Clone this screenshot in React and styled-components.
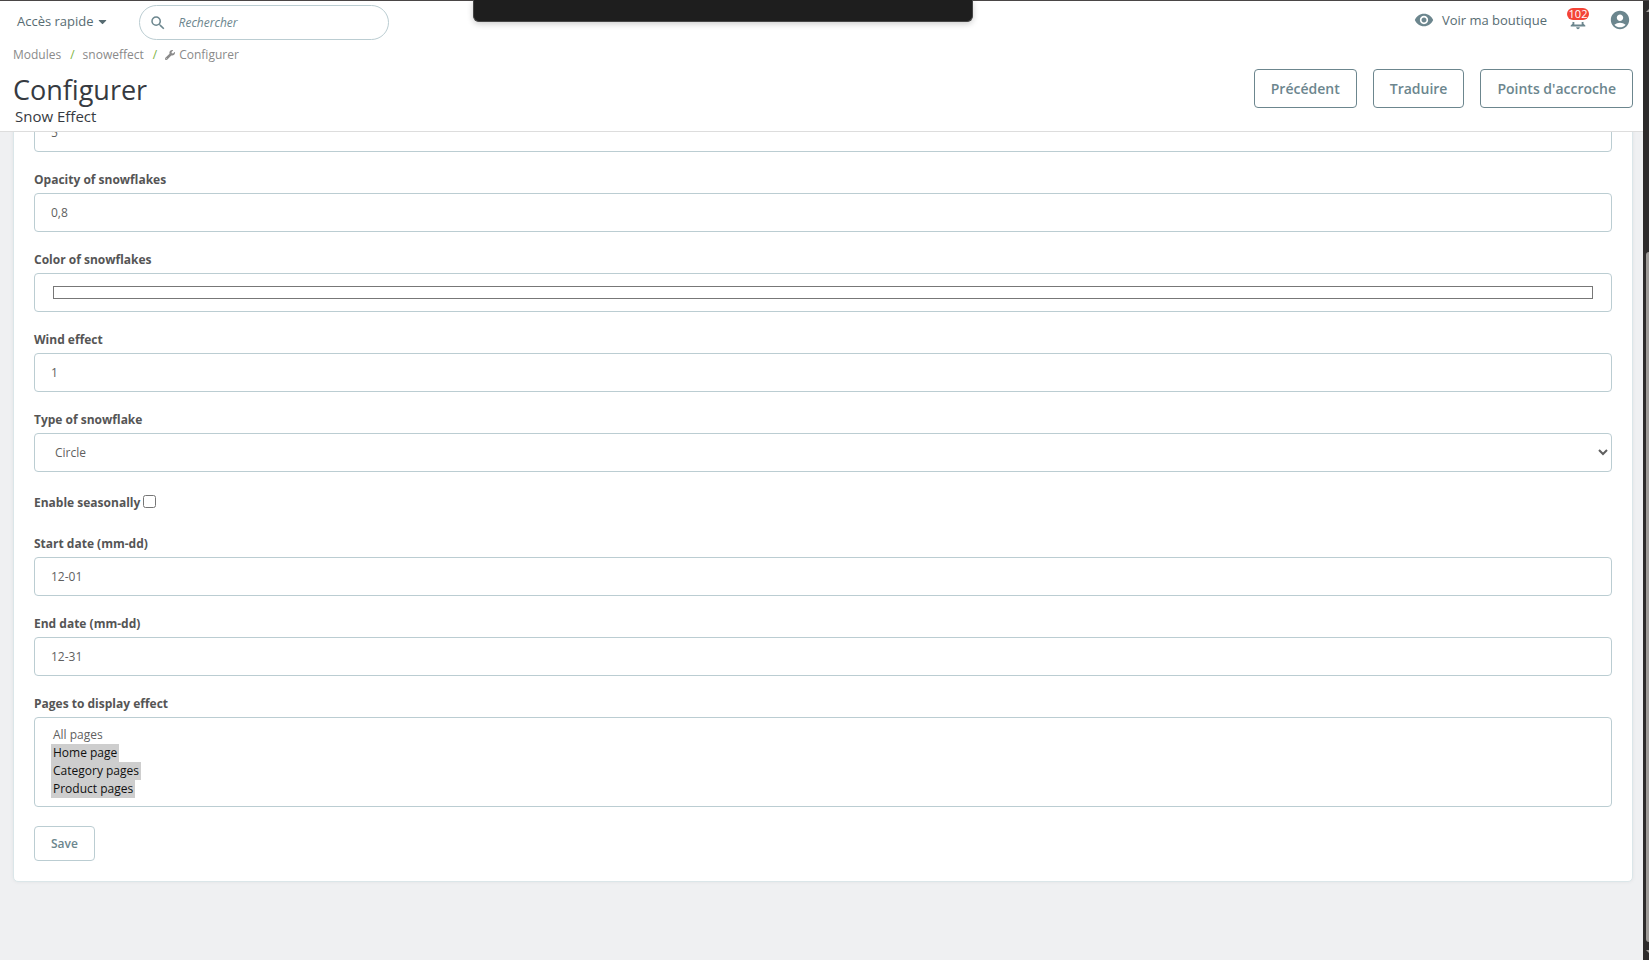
// Libraries
import React, { useLayoutEffect, useRef } from "react";
import styled, { createGlobalStyle } from "styled-components";
import { MdSearch, MdVisibility, MdNotificationsNone, MdAccountCircle } from "react-icons/md";
import { FaWrench, FaCaretDown } from "react-icons/fa";

// Styled
const GlobalStyle = createGlobalStyle`
    * {
        box-sizing: border-box;
    }

    body {
        margin: 0;
        background-color: #eff0f2;
        color: #363a41;
        font-family: "Open Sans", "Noto Sans", sans-serif;
        font-size: 12px;
        line-height: 20px;
    }

    button, input, select {
        font: inherit;
    }
`;

const Window = styled.div`
    display: flex;
    height: 100vh;
    border-top: 1px solid #4a4646;
`;

const Page = styled.div`
    display: flex;
    flex: 1;
    flex-direction: column;
    min-width: 0;
`;

const ScrollTrack = styled.div`
    display: flex;
    flex-direction: column;
    justify-content: space-between;
    width: 6px;
    padding-left: 3px;
    background-color: #2e2c2c;
    overflow: hidden;
`;

const ScrollArrow = styled.svg`
    display: block;
    width: 6px;
    height: 18px;
    fill: #a3a09d;
`;

const ScrollThumb = styled.div`
    height: 72%;
    margin-top: auto;
    width: 6px;
    border-radius: 4px;
    background-color: #9f9c99;
`;

const Notch = styled.div`
    position: absolute;
    top: 0;
    left: 473px;
    z-index: 2;
    width: 500px;
    height: 22px;
    border: 1px solid #454545;
    border-top: 0;
    border-radius: 0 0 6px 6px;
    background-color: #1e1e1e;
    box-shadow: 0 2px 6px rgba(0, 0, 0, 0.2);
`;

const PageHeader = styled.header`
    border-bottom: 1px solid #dddddd;
    background-color: #fff;
`;

const TopBar = styled.div`
    display: flex;
    align-items: flex-start;
    padding: 4px 12px 0 17px;
`;

const QuickAccess = styled.button`
    display: flex;
    align-items: center;
    gap: 2px;
    height: 32px;
    padding: 0;
    border: 0;
    background: none;
    color: #576c72;
    font-size: 13px;
`;

const SearchBox = styled.label`
    display: flex;
    align-items: center;
    gap: 12px;
    width: 250px;
    height: 35px;
    margin-left: 30px;
    padding: 0 9px;
    border: 1px solid #bbcdd2;
    border-radius: 18px;
    color: #6c868e;
`;

const SearchInput = styled.input`
    flex: 1;
    min-width: 0;
    padding: 0;
    border: 0;
    outline: 0;
    background: none;

    &::placeholder {
        color: #6c868e;
        font-style: italic;
        opacity: 1;
    }
`;

const TopLinks = styled.div`
    display: flex;
    align-items: center;
    height: 30px;
    margin-left: auto;
    color: #6c868e;
`;

const ShopLink = styled.a`
    display: flex;
    align-items: center;
    gap: 8px;
    color: #576c72;
    font-size: 13px;
    text-decoration: none;

    svg {
        color: #6c868e;
    }
`;

const IconButton = styled.button`
    position: relative;
    display: flex;
    margin-left: 20px;
    padding: 0;
    border: 0;
    background: none;
    color: inherit;
`;

const Badge = styled.span`
    position: absolute;
    top: -1px;
    left: 0;
    width: 22px;
    height: 12px;
    border-radius: 6px;
    background-color: #f44336;
    box-shadow: 0 0 0 2px #fff;
    color: #fff;
    font-size: 11px;
    line-height: 12px;
    text-align: center;
`;

const Breadcrumb = styled.nav`
    display: flex;
    align-items: center;
    padding: 5px 13px 0;
    color: #8a8a8a;
`;

const Crumb = styled.a`
    display: flex;
    align-items: center;
    gap: 4px;
    color: inherit;
    text-decoration: none;

    & + &::before {
        padding: 0 4px 0 9px;
        color: #7cb342;
        content: "/";
    }
`;

const TitleRow = styled.div`
    display: flex;
    justify-content: space-between;
    padding: 4px 10px 8px 13px;
`;

const PageTitle = styled.h1`
    margin: 0;
    font-size: 27px;
    font-weight: 400;
    line-height: 41px;
`;

const PageSubtitle = styled.h2`
    margin: 0;
    padding-left: 2px;
    font-size: 15px;
    font-weight: 400;
    line-height: 13px;
`;

const ButtonGroup = styled.div`
    display: flex;
    gap: 16px;
`;

const Button = styled.button`
    height: ${({ $small }) => ($small ? 35 : 39)}px;
    padding: 0 16px;
    border: 1px solid ${({ $small }) => ($small ? "#bbcdd2" : "#6c868e")};
    border-radius: 4px;
    background-color: #fff;
    color: #6c868e;
    font-size: ${({ $small }) => ($small ? 12 : 14)}px;
    font-weight: 600;
`;

const Content = styled.main`
    flex: 1;
    min-height: 0;
    padding: 0 10px 78px 13px;
    overflow-y: auto;
    scrollbar-width: none;
`;

const Card = styled.form`
    display: flex;
    flex-direction: column;
    align-items: flex-start;
    gap: 19px;
    padding: 20px;
    border: 1px solid #dbe6e9;
    border-radius: 5px;
    background-color: #fff;
    box-shadow: 0 0 4px rgba(0, 0, 0, 0.06);
`;

const FieldList = styled.div`
    display: flex;
    flex-direction: column;
    gap: 18px;
    width: 100%;
`;

const FieldBox = styled.div`
    display: flex;
    flex-direction: column;
    gap: 3px;
`;

const CheckRow = styled.div`
    display: flex;
    align-items: center;
    gap: 3px;
    height: 26px;
`;

const Label = styled.label`
    color: #555;
    font-weight: 700;
`;

const Input = styled.input`
    width: 100%;
    height: 39px;
    padding: ${({ type }) => (type === "color" ? "8px 16px" : "0 16px")};
    border: 1px solid #bbcdd2;
    border-radius: 4px;
    background-color: #fff;
    color: #5f5f5f;
`;

const Checkbox = styled.input`
    width: 13px;
    height: 13px;
    margin: 0 0 3px;
`;

const Select = styled.select`
    width: 100%;
    height: 39px;
    padding: 0 0 0 16px;
    border: 1px solid #bbcdd2;
    border-radius: 4px;
    background-color: #fff;
    color: #5f5f5f;
`;

const MultiSelect = styled(Select)`
    height: 90px;
    padding: 8px 16px;
    overflow: hidden;

    option {
        width: fit-content;
    }
`;

const Field = ({ id, label, children }) => (
    <FieldBox>
        <Label htmlFor={id}>{label}</Label>
        {children}
    </FieldBox>
);

const Header = () => (
    <PageHeader>
        <TopBar>
            <QuickAccess type="button">
                Accès rapide <FaCaretDown size={13} />
            </QuickAccess>
            <SearchBox>
                <MdSearch size={18} />
                <SearchInput type="text" placeholder="Rechercher" aria-label="Rechercher" />
            </SearchBox>
            <TopLinks>
                <ShopLink href="#boutique">
                    <MdVisibility size={20} /> Voir ma boutique
                </ShopLink>
                <IconButton type="button">
                    <MdNotificationsNone size={22} />
                    <Badge>102</Badge>
                </IconButton>
                <IconButton type="button" aria-label="Compte">
                    <MdAccountCircle size={22} />
                </IconButton>
            </TopLinks>
        </TopBar>
        <Breadcrumb>
            <Crumb href="#modules">Modules</Crumb>
            <Crumb href="#snoweffect">snoweffect</Crumb>
            <Crumb href="#configurer">
                <FaWrench size={10} /> Configurer
            </Crumb>
        </Breadcrumb>
        <TitleRow>
            <div>
                <PageTitle>Configurer</PageTitle>
                <PageSubtitle>Snow Effect</PageSubtitle>
            </div>
            <ButtonGroup>
                <Button type="button">Précédent</Button>
                <Button type="button">Traduire</Button>
                <Button type="button">Points d'accroche</Button>
            </ButtonGroup>
        </TitleRow>
    </PageHeader>
);

const SnowForm = () => (
    <Card onSubmit={(e) => e.preventDefault()}>
        <FieldList>
            <Input type="text" defaultValue="5" aria-label="Speed" />
            <Field id="opacity" label="Opacity of snowflakes">
                <Input id="opacity" type="text" defaultValue="0,8" />
            </Field>
            <Field id="color" label="Color of snowflakes">
                <Input id="color" type="color" defaultValue="#ffffff" />
            </Field>
            <Field id="wind" label="Wind effect">
                <Input id="wind" type="text" defaultValue="1" />
            </Field>
            <Field id="type" label="Type of snowflake">
                <Select id="type">
                    <option>Circle</option>
                </Select>
            </Field>
            <CheckRow>
                <Label htmlFor="season">Enable seasonally</Label>
                <Checkbox id="season" type="checkbox" />
            </CheckRow>
            <Field id="start" label="Start date (mm-dd)">
                <Input id="start" type="text" defaultValue="12-01" />
            </Field>
            <Field id="end" label="End date (mm-dd)">
                <Input id="end" type="text" defaultValue="12-31" />
            </Field>
            <Field id="pages" label="Pages to display effect">
                <MultiSelect id="pages" multiple defaultValue={["home", "category", "product"]}>
                    <option value="all">All pages</option>
                    <option value="home">Home page</option>
                    <option value="category">Category pages</option>
                    <option value="product">Product pages</option>
                </MultiSelect>
            </Field>
        </FieldList>
        <Button $small type="submit">
            Save
        </Button>
    </Card>
);

const App = () => {
    const content = useRef(null);

    // Open on the end of the form
    useLayoutEffect(() => {
        content.current.scrollTop = content.current.scrollHeight;
    }, []);

    return (
        <Window>
            <GlobalStyle />
            <Notch />
            <Page>
                <Header />
                <Content ref={content}>
                    <SnowForm />
                </Content>
            </Page>
            <ScrollTrack>
                <ScrollArrow viewBox="0 0 6 18">
                    <path d="M0 11L4 7L8 11Z" />
                </ScrollArrow>
                <ScrollThumb />
                <ScrollArrow viewBox="0 0 6 18">
                    <path d="M0 8L4 12L8 8Z" />
                </ScrollArrow>
            </ScrollTrack>
        </Window>
    );
};

export default App;
